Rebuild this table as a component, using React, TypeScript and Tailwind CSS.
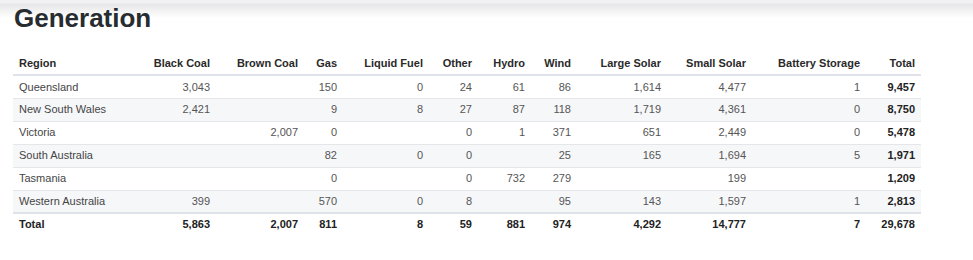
const columns = [
  { key: "region", label: "Region", w: "w-[127px]" },
  { key: "black", label: "Black Coal", w: "w-[76px]" },
  { key: "brown", label: "Brown Coal", w: "w-[88px]" },
  { key: "gas", label: "Gas", w: "w-[39px]" },
  { key: "liquid", label: "Liquid Fuel", w: "w-[86px]" },
  { key: "other", label: "Other", w: "w-[49px]" },
  { key: "hydro", label: "Hydro", w: "w-[53px]" },
  { key: "wind", label: "Wind", w: "w-[46px]" },
  { key: "large", label: "Large Solar", w: "w-[90px]" },
  { key: "small", label: "Small Solar", w: "w-[85px]" },
  { key: "battery", label: "Battery Storage", w: "w-[114px]" },
  { key: "total", label: "Total", w: "w-[55px]" },
];

const rows: string[][] = [
  ["Queensland", "3,043", "", "150", "0", "24", "61", "86", "1,614", "4,477", "1", "9,457"],
  ["New South Wales", "2,421", "", "9", "8", "27", "87", "118", "1,719", "4,361", "0", "8,750"],
  ["Victoria", "", "2,007", "0", "", "0", "1", "371", "651", "2,449", "0", "5,478"],
  ["South Australia", "", "", "82", "0", "0", "", "25", "165", "1,694", "5", "1,971"],
  ["Tasmania", "", "", "0", "", "0", "732", "279", "", "199", "", "1,209"],
  ["Western Australia", "399", "", "570", "0", "8", "", "95", "143", "1,597", "1", "2,813"],
];

const totals = ["Total", "5,863", "2,007", "811", "8", "59", "881", "974", "4,292", "14,777", "7", "29,678"];

export default function App() {
  return (
    <div className="h-[260px] w-[973px] bg-white bg-[linear-gradient(to_bottom,#f1f1f3_0px,#f1f1f3_3px,#e6e6e8_4px,#ffffff_18px)] font-['Liberation_Sans',Arial,sans-serif]">
      <h1 className="pl-[14px] pt-[3px] text-[26px] font-bold leading-[30px] text-[#272c31]">
        Generation
      </h1>
      <div className="pl-[13px] pt-[19px]">
        <table className="table-fixed border-collapse text-[11px]">
          <thead>
            <tr className="border-b-2 border-[#dfe2e8]">
              {columns.map((c, i) => (
                <th
                  key={c.key}
                  className={`${c.w} h-[23px] px-[6px] font-bold text-[#2a2a2a] ${i === 0 ? "text-left" : "text-right"}`}
                >
                  {c.label}
                </th>
              ))}
            </tr>
          </thead>
          <tbody>
            {rows.map((r, ri) => (
              <tr
                key={r[0]}
                className={`border-t border-[#e4e6ea] ${ri % 2 === 1 ? "bg-[#f6f7f9]" : "bg-white"}`}
              >
                {r.map((v, i) => (
                  <td
                    key={i}
                    className={`h-[23px] px-[6px] ${
                      i === 0
                        ? "text-left text-[#454545]"
                        : i === r.length - 1
                          ? "text-right font-bold text-[#222]"
                          : "text-right text-[#555]"
                    }`}
                  >
                    {v}
                  </td>
                ))}
              </tr>
            ))}
            <tr className="border-t-2 border-[#dfe2e8]">
              {totals.map((v, i) => (
                <td
                  key={i}
                  className={`h-[22px] px-[6px] font-bold text-[#222] ${i === 0 ? "text-left" : "text-right"}`}
                >
                  {v}
                </td>
              ))}
            </tr>
          </tbody>
        </table>
      </div>
    </div>
  );
}
